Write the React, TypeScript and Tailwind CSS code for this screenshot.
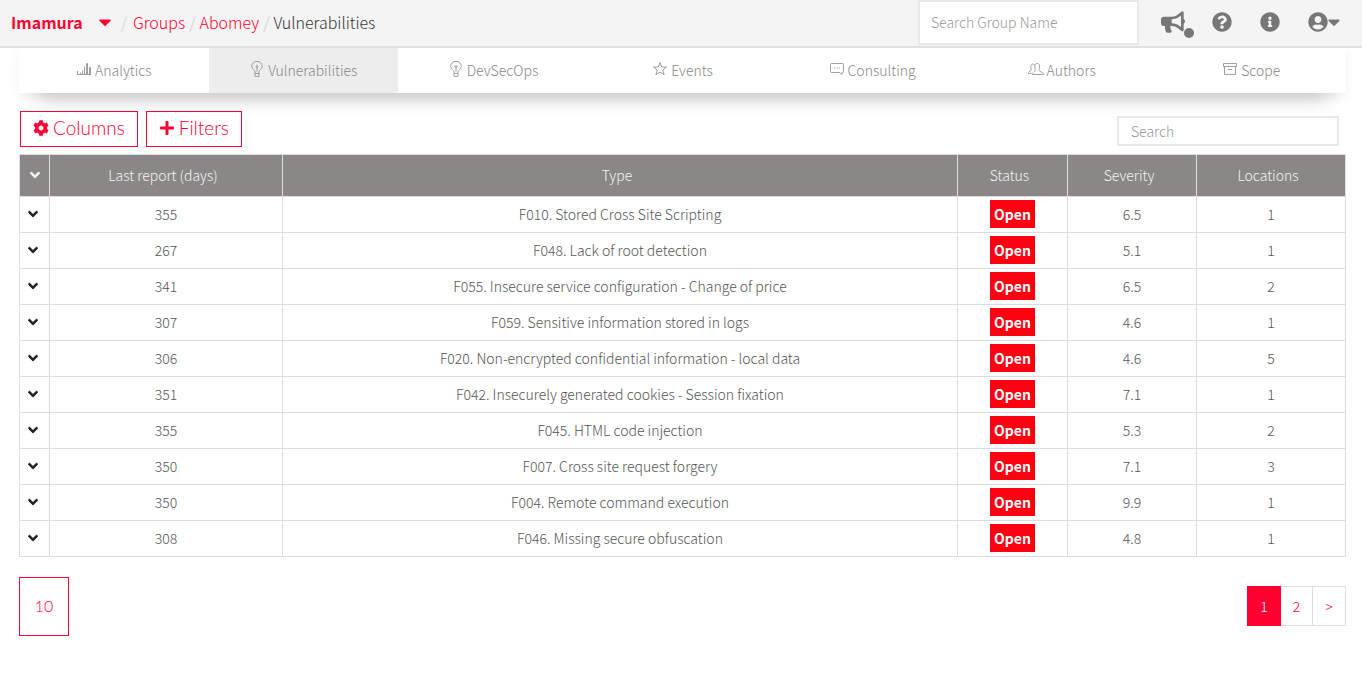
import React from "react";
import { FaBullhorn, FaCaretDown, FaCog, FaInfoCircle, FaPlus, FaQuestionCircle, FaUserCircle, FaAngleDown } from "react-icons/fa";

type IconName = "graph" | "bulb" | "star" | "comment" | "users" | "box";

function TabIcon({ name }: { name: IconName }) {
  const common = { viewBox: "0 0 16 16", fill: "none", stroke: "currentColor", strokeWidth: 0.8, className: "mb-0.5 h-4 w-4 shrink-0", "aria-hidden": true };
  switch (name) {
    case "graph":
      return (
        <svg {...common}>
          <path d="M1.500 10v3.500M4.500 11.500v2M6.500 9.500v4M8.500 13.500v-8M10.500 13.500v-11h1v11M13.500 13.500v-7h1v7M1 13.500h14" />
        </svg>
      );
    case "bulb":
      return (
        <svg {...common}>
          <path d="M6 12.500v-2c0-1.600-3.300-2.300-3.300-5.200a5.300 5 0 0 1 10.600 0c0 2.900-3.300 3.600-3.300 5.200v2zM6 12.500v2.900h4v-2.900M8 10.500V6" />
          <circle cx="8" cy="5.500" r="1" />
        </svg>
      );
    case "star":
      return (
        <svg {...common}>
          <path d="M8 1.500l1.700 4.500h4.800l-3.800 3 1.400 4.700L8 11l-4.100 2.700L5.300 9 1.500 6h4.800z" />
        </svg>
      );
    case "comment":
      return (
        <svg {...common}>
          <path d="M2.500 2.500h11a1 1 0 0 1 1 1v7a1 1 0 0 1-1 1h-.500v2l-2.500-2h-8a1 1 0 0 1-1-1v-7a1 1 0 0 1 1-1z" />
          <path d="M5 7h1.200M7.400 7h1.200M9.800 7H11" />
        </svg>
      );
    case "users":
      return (
        <svg {...common}>
          <path d="M6.500 10.500C7.500 9.500 7 8 6.900 6.500 6.500 4 7.400 2.500 9.200 2.500s2.700 1.500 2.300 4c-.200 1.500-.600 3 .500 4l2.500 1c.700.400 1 1 1 2h-11c0-1 .200-1.600 1-2z" />
          <path d="M6.500 3.500C4 2.300 2.400 4 2.900 6.500c.300 1.500.600 2.500-.400 3.300L1 10.800c-.600.500-.600 1-.600 1.700h3" />
        </svg>
      );
    case "box":
      return (
        <svg {...common}>
          <path d="M1.500 2.500h13v3h-13zM2.500 5.500v8h11v-8M6 8.500h4" />
        </svg>
      );
  }
}

const tabs: { label: string; icon: IconName }[] = [
  { label: "Analytics", icon: "graph" },
  { label: "Vulnerabilities", icon: "bulb" },
  { label: "DevSecOps", icon: "bulb" },
  { label: "Events", icon: "star" },
  { label: "Consulting", icon: "comment" },
  { label: "Authors", icon: "users" },
  { label: "Scope", icon: "box" },
];

const rows: [number, string, string, number][] = [
  [355, "F010. Stored Cross Site Scripting", "6.5", 1],
  [267, "F048. Lack of root detection", "5.1", 1],
  [341, "F055. Insecure service configuration - Change of price", "6.5", 2],
  [307, "F059. Sensitive information stored in logs", "4.6", 1],
  [306, "F020. Non-encrypted confidential information - local data", "4.6", 5],
  [351, "F042. Insecurely generated cookies - Session fixation", "7.1", 1],
  [355, "F045. HTML code injection", "5.3", 2],
  [350, "F007. Cross site request forgery", "7.1", 3],
  [350, "F004. Remote command execution", "9.9", 1],
  [308, "F046. Missing secure obfuscation", "4.8", 1],
];

const cell = "border border-[#ddd] pt-0 pb-0.5";

export default function App() {
  return (
    <div className="min-h-screen bg-white font-['Noto_Sans_CJK_JP',sans-serif] text-sm leading-6 font-light text-[#555]">
      <header className="flex h-12 items-center justify-between border-b-2 border-[#e0e0e0] bg-[#f4f4f4] pr-[22px] pb-0.5 pl-[11px]">
        <nav aria-label="Breadcrumb" className="flex items-center text-base text-[#ff0030]">
          <button className="flex items-center gap-[15px] font-bold">
            Imamura <FaCaretDown aria-hidden className="h-5 w-3.5" />
          </button>
          <span className="pr-1.5 pl-[9px] text-[#ccc]">/</span>
          <a href="#groups">Groups</a>
          <span className="px-1 text-[#ccc]">/</span>
          <a href="#abomey">Abomey</a>
          <span className="px-1 text-[#ccc]">/</span>
          <span className="text-[#333]">Vulnerabilities</span>
        </nav>
        <div className="flex items-center text-[#777]">
          <input
            aria-label="Search Group Name"
            placeholder="Search Group Name"
            className="mr-[22px] h-[45px] w-[221px] border-2 border-[#e9e9e9] bg-white px-[11px] placeholder:text-[#999]"
          />
          <button aria-label="News" className="relative mr-4 flex w-[35px] items-center">
            <FaBullhorn className="h-6 w-6" />
            <span className="absolute right-0.5 -bottom-1 h-2.5 w-2.5 rounded-full bg-[#777]" />
          </button>
          <button aria-label="Help" className="mr-7">
            <FaQuestionCircle className="h-5 w-5" />
          </button>
          <button aria-label="Information" className="mr-7">
            <FaInfoCircle className="h-5 w-5" />
          </button>
          <button aria-label="User menu" className="flex items-center">
            <FaUserCircle className="h-5 w-5" />
            <FaCaretDown className="h-5 w-3" />
          </button>
        </div>
      </header>

      <main className="pr-4 pl-[19px]">
        <nav aria-label="Group sections" className="flex h-[45px] bg-white shadow-[0_20px_20px_-18px_rgba(0,0,0,0.4),0_4px_10px_rgba(0,0,0,0.06)] [clip-path:inset(0_-16px_-32px_-16px)]">
          {tabs.map((tab) => (
            <a
              key={tab.label}
              href={"#" + tab.label.toLowerCase()}
              className={"flex flex-1 items-center justify-center gap-[3px] pb-0.5 text-[#888] " + (tab.label === "Vulnerabilities" ? "bg-[#ededed]" : "")}
            >
              <TabIcon name={tab.icon} />
              {tab.label}
            </a>
          ))}
        </nav>

        <div className="flex items-end justify-between pt-[18px] pr-[7px] pb-[7px] pl-px">
          <div className="flex gap-2 font-[Lato,sans-serif] text-[19px] leading-6 text-[#ff0030]">
            <button className="flex h-9 items-center gap-1 border border-[#ff0030] px-3 pb-0.5">
              <FaCog aria-hidden className="h-4 w-4" /> Columns
            </button>
            <button className="flex h-9 items-center gap-1 border border-[#ff0030] px-3 pb-0.5">
              <FaPlus aria-hidden className="h-4 w-4" /> Filters
            </button>
          </div>
          <input aria-label="Search" placeholder="Search" className="mb-px h-[30px] w-[222px] border-2 border-[#e9e9e9] px-3 placeholder:text-[#999]" />
        </div>

        <table className="w-full table-fixed border-collapse text-center">
          <colgroup>
            <col className="w-[30px]" />
            <col className="w-[233px]" />
            <col />
            <col className="w-[110px]" />
            <col className="w-[129px]" />
            <col className="w-[149px]" />
          </colgroup>
          <thead className="bg-[#8b8787] text-[#f4f4f4]">
            <tr className="h-[42px]">
              <th className={cell}>
                <button aria-label="Expand all rows" className="block w-full">
                  <FaAngleDown className="mx-auto h-4 w-4" />
                </button>
              </th>
              {["Last report (days)", "Type", "Status", "Severity", "Locations"].map((name) => (
                <th key={name} className={cell + " pr-1.5 font-light"}>{name}</th>
              ))}
            </tr>
          </thead>
          <tbody>
            {rows.map(([days, type, severity, locations]) => (
              <tr key={type} className="h-9">
                <td className={cell}>
                  <button aria-label={"Expand " + type} className="block w-full pr-1 text-[#222]">
                    <FaAngleDown className="mx-auto h-4 w-4" />
                  </button>
                </td>
                <td className={cell}>{days}</td>
                <td className={cell}>{type}</td>
                <td className={cell}>
                  <span className="inline-block bg-[#ff0011] px-1 py-0.5 font-bold text-white">Open</span>
                </td>
                <td className={cell}>{severity}</td>
                <td className={cell}>{locations}</td>
              </tr>
            ))}
          </tbody>
        </table>

        <div className="flex items-center justify-between pt-5">
          <button aria-label="Rows per page" className="h-[59px] w-[50px] border border-[#ff0030] pb-0.5 font-[Lato,sans-serif] text-base text-[#ff0030]">
            10
          </button>
          <nav aria-label="Pagination" className="mb-0.5 flex h-10 text-[#ff0030]">
            <a href="#page-1" aria-current="page" className="flex w-[34px] items-center justify-center bg-[#ff0030] text-white">1</a>
            <a href="#page-2" className="flex w-8 items-center justify-center border-y border-r border-[#ddd]">2</a>
            <a href="#next" className="flex w-[33px] items-center justify-center border-y border-r border-[#ddd]">&gt;</a>
          </nav>
        </div>
      </main>
    </div>
  );
}
